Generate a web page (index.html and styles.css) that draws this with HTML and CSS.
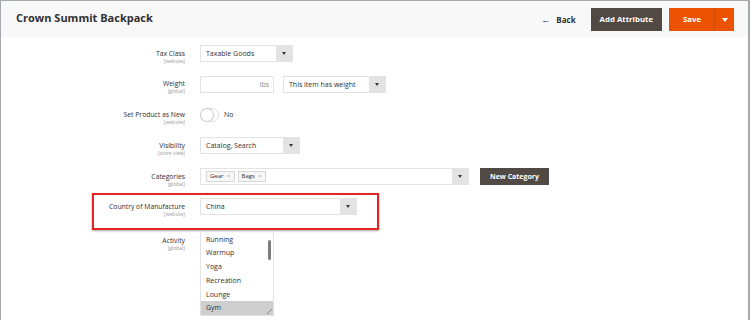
FILE: index.html
```html
<!DOCTYPE html>
<html lang="en">
<head>
  <meta charset="UTF-8">
  <meta name="viewport" content="width=device-width, initial-scale=1.0">
  <title>Crown Summit Backpack</title>
  <link rel="stylesheet" href="styles.css">
</head>
<body>
  <div class="frame">
    <header class="page-header">
      <h1>Crown Summit Backpack</h1>
      <div class="actions">
        <a class="back" href="#"><span class="back-arrow">&larr;</span> Back</a>
        <button class="btn-dark">Add Attribute</button>
        <div class="save">
          <button class="save-main">Save</button>
          <button class="save-toggle"><span class="caret-white"></span></button>
        </div>
      </div>
    </header>

    <main class="form">
      <div class="field">
        <div class="label">Tax Class<span class="scope">[website]</span></div>
        <div class="select w-tax"><span>Taxable Goods</span><span class="arrow"><i class="caret"></i></span></div>
      </div>

      <div class="field">
        <div class="label">Weight<span class="scope">[global]</span></div>
        <div class="input w-weight"><span class="addon">lbs</span></div>
        <div class="select w-hasweight"><span>This item has weight</span><span class="arrow"><i class="caret"></i></span></div>
      </div>

      <div class="field">
        <div class="label">Set Product as New<span class="scope">[website]</span></div>
        <div class="toggle"><span class="knob"></span></div>
        <span class="toggle-text">No</span>
      </div>

      <div class="field">
        <div class="label">Visibility<span class="scope">[store view]</span></div>
        <div class="select w-vis"><span>Catalog, Search</span><span class="arrow"><i class="caret"></i></span></div>
      </div>

      <div class="field field-cat">
        <div class="label">Categories<span class="scope">[global]</span></div>
        <div class="select w-cat">
          <span class="tags">
            <span class="tag">Gear <b>&times;</b></span>
            <span class="tag">Bags <b>&times;</b></span>
          </span>
          <span class="arrow"><i class="caret"></i></span>
        </div>
        <button class="btn-dark btn-newcat">New Category</button>
      </div>

      <div class="field highlight">
        <div class="label">Country of Manufacture<span class="scope">[website]</span></div>
        <div class="select w-country"><span>China</span><span class="arrow"><i class="caret"></i></span></div>
      </div>

      <div class="field field-activity">
        <div class="label">Activity<span class="scope">[global]</span></div>
        <div class="listbox">
          <div class="opt">Running</div>
          <div class="opt">Warmup</div>
          <div class="opt">Yoga</div>
          <div class="opt">Recreation</div>
          <div class="opt">Lounge</div>
          <div class="opt selected">Gym</div>
          <span class="thumb"></span>
          <span class="grip"></span>
        </div>
      </div>
    </main>
  </div>
</body>
</html>
```

FILE: styles.css
```css
body {
  margin: 0;
  font-family: "Open Sans", Arial, sans-serif;
  color: #303030;
  background: #fff;
}
.frame {
  height: 319px;
  border-top: 1px solid #a5a9ad;
  border-left: 1px solid #a5a9ad;
  border-right: 2px solid #a5a9ad;
  overflow: hidden;
}
.page-header {
  height: 36px;
  background: #f8f8f8;
  display: flex;
  align-items: center;
  justify-content: space-between;
  padding: 0 14px 0 15px;
}
.page-header h1 {
  margin: 0;
  font-size: 11px;
  font-weight: 700;
  color: #303030;
  margin-top: -4px;
}
.actions {
  display: flex;
  align-items: center;
}
.back {
  color: #303030;
  text-decoration: none;
  font-size: 8px;
  font-weight: 700;
  margin-right: 15px;
}
.back-arrow {
  font-size: 9px;
  margin-right: 4px;
}
button {
  font-family: "Open Sans", Arial, sans-serif;
  cursor: pointer;
}
.btn-dark {
  background: #514943;
  color: #fff;
  border: 1px solid #514943;
  font-size: 7.8px;
  font-weight: 700;
  height: 23px;
  padding: 0 8px;
}
.save {
  display: flex;
  margin-left: 7px;
  height: 23px;
}
.save button {
  background: #eb5202;
  border: 1px solid #eb5202;
  color: #fff;
  height: 23px;
}
.save-main {
  width: 46px;
  font-size: 7.8px;
  font-weight: 700;
  border-right: 1px solid #d24a02 !important;
}
.save-toggle {
  width: 19px;
  padding: 0;
}
.caret-white {
  display: inline-block;
  border-left: 3px solid transparent;
  border-right: 3px solid transparent;
  border-top: 4px solid #fff;
  vertical-align: middle;
}

.form {
  padding-top: 8px;
}
.field {
  display: flex;
  align-items: flex-start;
  height: 17px;
  margin-bottom: 13.75px;
}
.label {
  width: 184px;
  margin-right: 15px;
  text-align: right;
  font-size: 6.8px;
  line-height: 8px;
  padding-top: 4.5px;
  color: #303030;
}
.scope {
  display: block;
  font-size: 5px;
  line-height: 6px;
  color: #999;
}
.select, .input {
  box-sizing: border-box;
  height: 17px;
  border: 1px solid #e3e3e3;
  background: #fff;
  display: flex;
  align-items: center;
  font-size: 7px;
  color: #303030;
  position: relative;
}
.select > span:first-child {
  flex: 1;
  padding-left: 5px;
}
.arrow {
  width: 16px;
  align-self: stretch;
  background: #e3e3e3;
  display: flex;
  align-items: center;
  justify-content: center;
}
.caret {
  border-left: 2px solid transparent;
  border-right: 2px solid transparent;
  border-top: 3px solid #41362f;
}
.w-tax { width: 93px; }
.w-weight {
  width: 74px;
  justify-content: flex-end;
  margin-right: 9px;
}
.addon {
  color: #8a8a8a;
  padding-right: 4px;
}
.w-hasweight { width: 103px; }
.w-vis { width: 100px; }
.w-cat { width: 269px; }
.w-country { width: 157px; }

.toggle {
  box-sizing: border-box;
  width: 19px;
  height: 14px;
  margin-top: 1px;
  border: 1px solid #ddd;
  border-radius: 7px;
  background: #fff;
  position: relative;
}
.knob {
  position: absolute;
  left: 0;
  top: 0;
  width: 12px;
  height: 12px;
  border-radius: 50%;
  background: #fff;
  box-shadow: 0 0 1px 1px #cfcfcf;
}
.toggle-text {
  font-size: 7px;
  margin-left: 5px;
  margin-top: 3px;
}

.field-cat {
  margin-bottom: 8px;
}
.tags {
  display: flex;
  gap: 3px;
  padding-left: 3px;
}
.tag {
  border: 1px solid #d6d6d6;
  background: #f7f7f7;
  font-size: 6px;
  padding: 1px 3px;
  line-height: 7px;
}
.tag b {
  font-weight: 400;
  color: #999;
  margin-left: 2px;
}
.btn-newcat {
  height: 17px;
  margin-left: 11px;
  padding: 0 9px;
  font-size: 7px;
}

.highlight {
  height: auto;
  margin-left: 91px;
  width: 287px;
  box-sizing: border-box;
  border: 2px solid #e22626;
  box-shadow: 0 1px 2px rgba(0, 0, 0, 0.35);
  padding: 3px 0 11px;
  margin-bottom: 1px;
}
.highlight .label {
  width: 91px;
}

.field-activity {
  height: auto;
}
.listbox {
  box-sizing: border-box;
  width: 74px;
  height: 85px;
  border: 1px solid #e3e3e3;
  padding-top: 1px;
  position: relative;
  overflow: hidden;
}
.opt {
  font-size: 7px;
  line-height: 13.8px;
  padding-left: 5px;
}
.opt.selected {
  background: #cecece;
}
.thumb {
  position: absolute;
  right: 2px;
  top: 8px;
  width: 3px;
  height: 20px;
  border-radius: 2px;
  background: #7d7d7d;
}
.grip {
  position: absolute;
  right: 1px;
  bottom: 1px;
  width: 5px;
  height: 5px;
  background: linear-gradient(135deg, transparent 45%, #888 50%, transparent 55%, transparent 70%, #888 75%, transparent 80%);
}
.field-activity .label {
  padding-top: 6px;
}
```
